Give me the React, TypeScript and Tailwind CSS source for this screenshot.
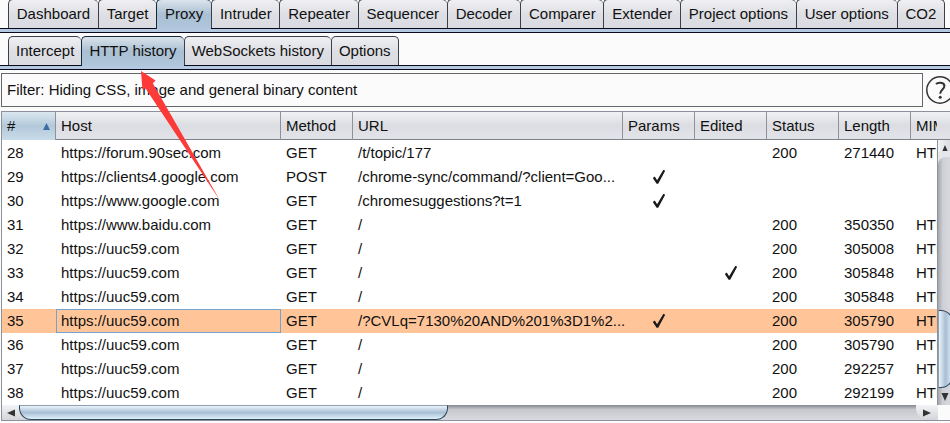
import React from "react";

type Tab = { label: string; active?: boolean };

const mainTabs: Tab[] = [
  { label: "Dashboard" },
  { label: "Target" },
  { label: "Proxy", active: true },
  { label: "Intruder" },
  { label: "Repeater" },
  { label: "Sequencer" },
  { label: "Decoder" },
  { label: "Comparer" },
  { label: "Extender" },
  { label: "Project options" },
  { label: "User options" },
  { label: "CO2" },
];

const proxyTabs: Tab[] = [
  { label: "Intercept" },
  { label: "HTTP history", active: true },
  { label: "WebSockets history" },
  { label: "Options" },
];

type Entry = {
  id: number;
  host: string;
  method: string;
  url: string;
  params?: boolean;
  edited?: boolean;
  status?: string;
  length?: string;
  mime?: string;
};

const entries: Entry[] = [
  { id: 28, host: "https://forum.90sec.com", method: "GET", url: "/t/topic/177", status: "200", length: "271440", mime: "HTML" },
  { id: 29, host: "https://clients4.google.com", method: "POST", url: "/chrome-sync/command/?client=Goo...", params: true },
  { id: 30, host: "https://www.google.com", method: "GET", url: "/chromesuggestions?t=1", params: true },
  { id: 31, host: "https://www.baidu.com", method: "GET", url: "/", status: "200", length: "350350", mime: "HTML" },
  { id: 32, host: "https://uuc59.com", method: "GET", url: "/", status: "200", length: "305008", mime: "HTML" },
  { id: 33, host: "https://uuc59.com", method: "GET", url: "/", edited: true, status: "200", length: "305848", mime: "HTML" },
  { id: 34, host: "https://uuc59.com", method: "GET", url: "/", status: "200", length: "305848", mime: "HTML" },
  { id: 35, host: "https://uuc59.com", method: "GET", url: "/?CVLq=7130%20AND%201%3D1%2...", params: true, status: "200", length: "305790", mime: "HTML" },
  { id: 36, host: "https://uuc59.com", method: "GET", url: "/", status: "200", length: "305790", mime: "HTML" },
  { id: 37, host: "https://uuc59.com", method: "GET", url: "/", status: "200", length: "292257", mime: "HTML" },
  { id: 38, host: "https://uuc59.com", method: "GET", url: "/", status: "200", length: "292199", mime: "HTML" },
];

const selectedId = 35;

function TabStrip({ label, tabs, fill }: { label: string; tabs: Tab[]; fill?: boolean }) {
  return (
    <nav aria-label={label} className="shrink-0">
      <div className="relative flex h-[30px] pl-2 pr-[5px] after:absolute after:inset-x-0 after:bottom-0 after:h-px after:bg-[#0a0a1e]">
        {tabs.map((t) => (
          <button
            key={t.label}
            type="button"
            className={
              "h-[30px] shrink-0 whitespace-nowrap rounded-t-[5px] border-l border-t px-[7px] pb-0.5 text-[15px] leading-[26px] last:border-r " +
              (fill ? "grow " : "") +
              (t.active
                ? "z-10 border-[#14283c] bg-linear-to-b from-[#dbe4ec] via-[#a9bfd2] to-[#b0c6dc]"
                : "border-[#3c3f4a] bg-linear-to-b from-[#f0f0f3] via-[#dedfe4] to-[#d9dbe1]")
            }
          >
            {t.label}
          </button>
        ))}
      </div>
      <div className="h-1 border-b border-[#0a0a1e] bg-[#b4c8e0]" />
    </nav>
  );
}

function Check({ label }: { label: string }) {
  return (
    <svg role="img" aria-label={label} viewBox="0 0 14 16" className="mx-auto block h-4 w-3.5">
      <path d="M0.8 8.9 L2.8 7.6 L5.1 11.2 L11.4 0.8 L13.2 1.8 L6.2 14.8 L4.6 14.8 Z" fill="#1a1a1a" />
    </svg>
  );
}

const headCell =
  "h-7 border-r border-[#8d919b] px-[5px] text-left font-normal";
const cell = "whitespace-nowrap px-[5px]";

function HistoryTable() {
  return (
    <table className="w-full table-fixed border-separate border-spacing-0 text-[15px] leading-6">
      <colgroup>
        <col className="w-[54px]" />
        <col className="w-[225px]" />
        <col className="w-[72px]" />
        <col className="w-[270px]" />
        <col className="w-[72px]" />
        <col className="w-[72px]" />
        <col className="w-[72px]" />
        <col className="w-[72px]" />
        <col />
      </colgroup>
      <thead>
        <tr>
          <th className={headCell + " bg-linear-to-b from-[#dbe7f0] via-[#b3c9da] to-[#c9dbe8]"}>
            <span className="flex items-center justify-between">
              #
              <svg viewBox="0 0 7 7" className="h-[7px] w-[7px]" aria-hidden="true">
                <path d="M3.5 0 L7 7 H0 Z" fill="#3c6ea5" />
              </svg>
            </span>
          </th>
          {["Host", "Method", "URL", "Params", "Edited", "Status", "Length"].map((h) => (
            <th key={h} className={headCell}>
              {h}
            </th>
          ))}
          <th className="h-7 overflow-hidden whitespace-nowrap pl-[5px] text-left font-normal">MIME type</th>
        </tr>
      </thead>
      <tbody className="before:block before:h-px">
        {entries.map((e) => (
          <tr key={e.id} className={e.id === selectedId ? "h-6 bg-[#ffc599]" : "h-6 bg-white"}>
            <td className={cell}>{e.id}</td>
            <td
              className={
                e.id === selectedId
                  ? cell + " outline outline-1 -outline-offset-1 outline-[#73a4d1]"
                  : cell
              }
            >
              {e.host}
            </td>
            <td className={cell}>{e.method}</td>
            <td className={cell}>{e.url}</td>
            <td>{e.params && <Check label="Has params" />}</td>
            <td>{e.edited && <Check label="Edited" />}</td>
            <td className={cell}>{e.status}</td>
            <td className={cell}>{e.length}</td>
            <td className={cell + " overflow-hidden"}>{e.mime}</td>
          </tr>
        ))}
      </tbody>
    </table>
  );
}

function Arrow({ d }: { d: string }) {
  return (
    <svg viewBox="0 0 8 8" className="h-2 w-2" aria-hidden="true">
      <path d={d} fill="#333" />
    </svg>
  );
}

function VerticalScroll() {
  return (
    <div className="flex w-[13px] shrink-0 flex-col overflow-hidden border-l border-[#8d919b] bg-linear-to-r from-[#a4a6ad] via-[#cfd0d6] via-40% to-[#d6d8de]">
      <button type="button" aria-label="Scroll up" className="flex h-[17px] w-[13px] shrink-0 items-center justify-center bg-linear-to-r from-[#f2f3f5] to-[#d9dbe0]">
        <Arrow d="M4 0 L7.5 8 H0.5 Z" />
      </button>
      <div className="h-2 w-[15px] shrink-0 rounded-tl-[12px] shadow-[-3px_-3px_0_3px_#e6e7ea]" />
      <div className="min-h-0 flex-1" />
      <div className="h-[78px] w-[15px] shrink-0 rounded-r-[12px] border border-l-[#8d9fb0] border-[#30465c] bg-linear-to-r from-[#eaf3fa] via-[#a9bfd4] to-[#dcecf8]" />
      <button type="button" aria-label="Scroll down" className="flex h-[17px] w-[13px] shrink-0 items-center justify-center">
        <Arrow d="M0.5 0 H7.5 L4 8 Z" />
      </button>
    </div>
  );
}

function HorizontalScroll() {
  return (
    <div className="flex h-4 shrink-0 border-b border-[#8d919b]">
      <div className="flex min-w-0 flex-1 bg-linear-to-b from-[#85878e] via-[#c6c8ce] via-30% to-[#d8dae0]">
        <div className="flex w-[46%] min-w-0 shrink-0 grow-0 basis-auto bg-linear-to-b from-[#f2f3f5] to-[#d3d5da] rounded-br-[12px]">
          <button type="button" aria-label="Scroll left" className="flex w-[17px] shrink-0 items-center justify-center">
            <Arrow d="M0 4 L8 0.5 V7.5 Z" />
          </button>
          <div className="-mr-[15px] h-[15px] min-w-0 flex-1 rounded-b-[12px] border border-t-[#8d9fb0] border-[#30465c] bg-linear-to-b from-[#eaf3fa] via-[#a9bfd4] to-[#dff1fb]" />
        </div>
        <div className="flex-1" />
        <button type="button" aria-label="Scroll right" className="flex w-[22px] shrink-0 items-center justify-center rounded-bl-[12px] bg-linear-to-b from-[#f2f3f5] to-[#d3d5da]">
          <Arrow d="M8 4 L0 0.5 V7.5 Z" />
        </button>
      </div>
      <div className="w-3 shrink-0 bg-[#fbfbfb]" />
    </div>
  );
}

export default function App() {
  return (
    <div className="relative flex min-h-screen flex-col overflow-hidden bg-[#fbfbfc] font-['Liberation_Sans',Arial,sans-serif] text-[15px] text-[#111]">
      <div className="-mt-px">
        <TabStrip label="Tools" tabs={mainTabs} fill />
      </div>
      <div className="h-[3px] shrink-0" />
      <TabStrip label="Proxy" tabs={proxyTabs} />

      <div className="mt-[3px] flex shrink-0 items-center overflow-hidden pl-px">
        <button type="button" className="h-[34px] min-w-0 flex-1 border border-[#65666b] px-[5px] text-left leading-8">
          Filter: Hiding CSS, image and general binary content
        </button>
        <button type="button" aria-label="Help" className="-mr-1 ml-[3px] shrink-0">
          <svg viewBox="0 0 28 28" className="h-7 w-7" fill="none" stroke="#333" aria-hidden="true">
            <circle cx="14" cy="14" r="13.2" strokeWidth="1.5" />
            <path d="M10 8 C11.8 6.2 18.4 5.6 18.4 10 C18.4 13.4 14.2 13.6 14.2 17.8" strokeWidth="2" />
            <circle cx="14.2" cy="21.2" r="1.5" fill="#333" stroke="none" />
          </svg>
        </button>
      </div>

      <div className="ml-px mt-1 border-l border-t border-[#8d919b] bg-white">
        <div>
          <div className="h-7 border-b border-[#7d818a] bg-linear-to-b from-[#f1f1f4] via-[#dcdde2] to-[#e3e4ea]" />
          <div className="-mt-7 flex">
            <div className="min-w-0 flex-1 overflow-hidden">
              <HistoryTable />
            </div>
            <div className="flex pt-7">
              <VerticalScroll />
            </div>
          </div>
        </div>
        <HorizontalScroll />
      </div>

      <svg viewBox="0 0 80 131" className="pointer-events-none absolute left-[141px] top-[71px] h-[131px] w-20" aria-hidden="true">
        <path d="M0 0 L14.6 9.5 L11.8 12.2 L79 129.5 L4.6 17.5 L1.4 18.5 Z" fill="#fc3a38" />
      </svg>
    </div>
  );
}
